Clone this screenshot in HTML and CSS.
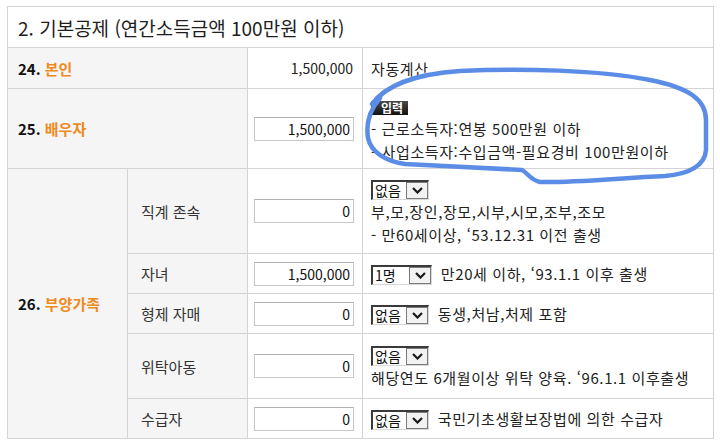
FILE: index.html
```html
<!DOCTYPE html>
<html lang="ko">
<head>
    <meta charset="UTF-8">
    <meta name="viewport" content="width=device-width, initial-scale=1.0">
    <title>기본공제</title>
    <link rel="stylesheet" href="styles.css">
</head>
<body>
<div class="page">
    <table class="deduct">
        <colgroup>
            <col class="c-label">
            <col class="c-sub">
            <col class="c-amount">
            <col class="c-note">
        </colgroup>

        <!-- 제목 -->
        <tr class="row-title">
            <th colspan="4" class="title">2. 기본공제 (연간소득금액 100만원 이하)</th>
        </tr>

        <!-- 24. 본인 -->
        <tr class="row-24">
            <th colspan="2" class="label">24. <span class="hl">본인</span></th>
            <td class="amount"><span class="fixed">1,500,000</span></td>
            <td class="note">자동계산</td>
        </tr>

        <!-- 25. 배우자 -->
        <tr class="row-25">
            <th colspan="2" class="label">25. <span class="hl">배우자</span></th>
            <td class="amount"><input class="num" type="text" value="1,500,000"></td>
            <td class="note">
                <span class="badge">입력</span><br>
                - 근로소득자:연봉 500만원 이하<br>
                - 사업소득자:수입금액-필요경비 100만원이하
            </td>
        </tr>

        <!-- 26. 부양가족 -->
        <tr class="row-parents">
            <th rowspan="5" class="label">26. <span class="hl">부양가족</span></th>
            <th class="sub">직계 존속</th>
            <td class="amount"><input class="num" type="text" value="0"></td>
            <td class="note">
                <span class="combo"><span class="combo-text">없음</span><span class="combo-btn"><svg width="11" height="7" viewBox="0 0 11 7"><polyline points="1,1 5.5,5.5 10,1" /></svg></span></span><br>
                부,모,장인,장모,시부,시모,조부,조모<br>
                - 만60세이상, ‘53.12.31 이전 출생
            </td>
        </tr>
        <tr class="row-small">
            <th class="sub">자녀</th>
            <td class="amount"><input class="num" type="text" value="1,500,000"></td>
            <td class="note">
                <span class="combo wide"><span class="combo-text">1명</span><span class="combo-btn"><svg width="11" height="7" viewBox="0 0 11 7"><polyline points="1,1 5.5,5.5 10,1" /></svg></span></span>
                만20세 이하, ‘93.1.1 이후 출생
            </td>
        </tr>
        <tr class="row-small">
            <th class="sub">형제 자매</th>
            <td class="amount"><input class="num" type="text" value="0"></td>
            <td class="note">
                <span class="combo"><span class="combo-text">없음</span><span class="combo-btn"><svg width="11" height="7" viewBox="0 0 11 7"><polyline points="1,1 5.5,5.5 10,1" /></svg></span></span>
                동생,처남,처제 포함
            </td>
        </tr>
        <tr class="row-foster">
            <th class="sub">위탁아동</th>
            <td class="amount"><input class="num" type="text" value="0"></td>
            <td class="note">
                <span class="combo"><span class="combo-text">없음</span><span class="combo-btn"><svg width="11" height="7" viewBox="0 0 11 7"><polyline points="1,1 5.5,5.5 10,1" /></svg></span></span><br>
                해당연도 6개월이상 위탁 양육. ‘96.1.1 이후출생
            </td>
        </tr>
        <tr class="row-small">
            <th class="sub">수급자</th>
            <td class="amount"><input class="num" type="text" value="0"></td>
            <td class="note">
                <span class="combo"><span class="combo-text">없음</span><span class="combo-btn"><svg width="11" height="7" viewBox="0 0 11 7"><polyline points="1,1 5.5,5.5 10,1" /></svg></span></span>
                국민기초생활보장법에 의한 수급자
            </td>
        </tr>
    </table>

    <!-- 손으로 그린 강조 표시 -->
    <svg class="scribble" width="720" height="444" viewBox="0 0 720 444">
        <path d="M 372 104 C 385 86, 415 74, 460 71 C 520 68, 600 70, 650 80 C 690 88, 706 100, 706 120 L 706 150 C 705 165, 690 174, 665 176 C 620 178, 570 183, 540 182 C 530 180, 527 172, 522 170 C 490 168, 440 166, 405 164 C 385 161, 371 152, 368 138 C 366 125, 368 112, 380 98" />
    </svg>
</div>
</body>
</html>
```

FILE: styles.css
```css
body {
    margin: 0;
    background-color: #fff;
    font-family: "Noto Sans CJK KR", "Noto Sans", sans-serif;
    color: #222;
}

.page {
    position: relative;
    width: 720px;
    height: 444px;
    overflow: hidden;
}

.deduct {
    margin: 6px 0 0 7px;
    width: 707px;
    border-collapse: collapse;
    table-layout: fixed;
    border: 1px solid #cfcfcf;
}

.c-label { width: 120px; }
.c-sub { width: 120px; }
.c-amount { width: 115px; }

.deduct th,
.deduct td {
    border: 1px solid #d4d4d4;
    padding: 0;
    font-weight: normal;
    text-align: left;
    vertical-align: middle;
}

/* 행 높이 */
.row-title { height: 41px; }
.row-24 { height: 41px; }
.row-25 { height: 80px; }
.row-parents { height: 85px; }
.row-small { height: 40px; }
.row-foster { height: 65px; }

.title {
    background-color: #fff;
    padding-left: 10px !important;
    font-size: 19px;
    color: #1e1e1e;
}

.label {
    background-color: #f5f5f5;
    padding-left: 10px !important;
    font-size: 15px;
    font-weight: bold !important;
    color: #111;
}

.hl {
    color: #ef8a1e;
}

.sub {
    background-color: #f5f5f5;
    padding-left: 13px !important;
    font-size: 15px;
    color: #333;
}

.amount {
    text-align: right !important;
    padding-right: 8px !important;
    font-size: 14px;
}

.fixed {
    padding-right: 1px;
}

.num {
    width: 100px;
    height: 24px;
    box-sizing: border-box;
    margin: 0;
    border: 1px solid #c8c8c8;
    border-top-color: #b0b0b0;
    padding: 0 3px 0 0;
    text-align: right;
    font-family: inherit;
    font-size: 14px;
    color: #111;
    background-color: #fff;
}

.note {
    padding-left: 8px !important;
    font-size: 15px;
    line-height: 23px;
    letter-spacing: 0.6px;
    color: #222;
}

.badge {
    display: inline-block;
    height: 14px;
    line-height: 14px;
    padding: 0 5px 0 10px;
    background: linear-gradient(#4a4a4a, #111);
    color: #fff;
    font-size: 12px;
    font-weight: bold;
    letter-spacing: 0;
    vertical-align: middle;
}

.combo {
    display: inline-flex;
    width: 58px;
    height: 20px;
    box-sizing: border-box;
    border: 2px solid #3a3a3a;
    border-right: 1px solid #d8d8d8;
    border-bottom: 1px solid #d8d8d8;
    background-color: #fff;
    vertical-align: middle;
    margin-right: 4px;
    letter-spacing: 0;
}

.combo.wide {
    width: 61px;
}

.combo-text {
    flex: 1;
    padding-left: 2px;
    font-size: 14px;
    line-height: 17px;
    color: #111;
}

.combo-btn {
    width: 22px;
    box-sizing: border-box;
    border: 1px solid #7a7a7a;
    background-color: #f2f2f2;
    display: flex;
    align-items: center;
    justify-content: center;
}

.combo-btn polyline {
    fill: none;
    stroke: #1a1a1a;
    stroke-width: 2.2;
}

.scribble {
    position: absolute;
    top: 0;
    left: 0;
    pointer-events: none;
}

.scribble path {
    fill: none;
    stroke: #5c8de6;
    stroke-width: 4.5;
    stroke-linecap: round;
    stroke-linejoin: round;
}
```
